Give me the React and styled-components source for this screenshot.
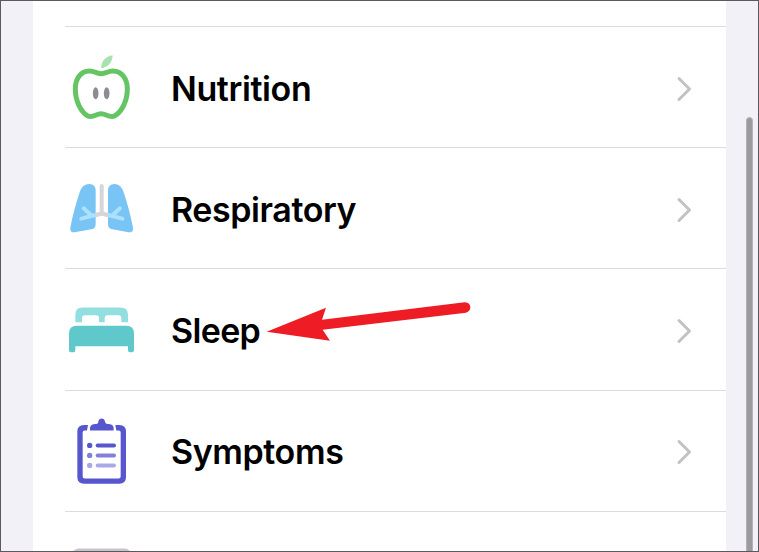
import React from 'react';
import styled, { createGlobalStyle } from 'styled-components';

const GlobalStyle = createGlobalStyle`
  *, *::before, *::after { box-sizing: border-box; }
  html, body { margin: 0; padding: 0; overflow: hidden; }
  body { font-family: Inter, "Liberation Sans", sans-serif; }
`;

const Screen = styled.main`
  position: relative;
  display: grid;
  grid-template-columns: 32px 693px 1fr;
  width: 759px;
  height: 552px;
  overflow: hidden;
  background: #f2f1f7;
  border: 1px solid #5b595f;
`;

const Panel = styled.section`
  grid-column: 2;
  height: 550px;
  padding: 25px 0 0 32px;
  background: #fff;
  overflow: hidden;
`;

const Row = styled.div`
  display: grid;
  grid-template-columns: 106px 1fr auto;
  align-items: center;
  height: 121.2px;
  padding-right: 34px;
  border-top: 1px solid #dcdcde;
`;

const Label = styled.span`
  padding-top: 3px;
  color: #000;
  font-size: 34px;
  font-weight: 600;
  line-height: 42px;
  letter-spacing: ${(p) => p.$tracking}px;
  white-space: nowrap;
`;

const Icon = styled.svg`
  display: block;
  align-self: start;
  width: 80px;
  height: 120px;
`;

const Chevron = styled.svg`
  display: block;
  width: 17px;
  height: 26px;
  margin-top: 3px;
`;

const Gutter = styled.aside`
  grid-column: 3;
  display: flex;
  justify-content: flex-end;
  padding: 116px 5px 0 0;
`;

const ScrollThumb = styled.div`
  width: 7px;
  height: 480px;
  border: 1px solid #b3b2b7;
  border-radius: 4px;
  background: #9b9b9d;
`;

const Arrow = styled.svg`
  position: absolute;
  left: 159px;
  top: 289px;
  width: 320px;
  height: 70px;
  pointer-events: none;
`;

const Apple = () => (
  <Icon viewBox="15 -55 240 360">
    <path d="M123 69C124 48 136 33 158 30C157 52 145 66 123 69Z" fill="#a9e2ae" />
    <path
      d="M123 85C107 85 105 77 89 77C61 77 46 101 46 131C46 166 62 199 82 211C99 220 107 205 123 205C140 205 148 220 165 211C186 198 202 166 202 131C202 101 186 77 158 77C142 77 140 85 123 85Z"
      fill="none" stroke="#65c565" strokeWidth="15" strokeLinejoin="round"
    />
    <ellipse cx="107" cy="144" rx="8.5" ry="18" fill="#8d8c91" />
    <ellipse cx="140" cy="144" rx="8.5" ry="18" fill="#8d8c91" />
  </Icon>
);

const Lungs = () => (
  <Icon viewBox="15 -66 240 360">
    <path d="M107 62V163Q107 176 94 178L44 187Q29 188 31 173C38 137 48 100 59 67Q67 42 88 42Q107 42 107 62Z" fill="#78c4f5" />
    <path d="M144 62V163Q144 176 157 178L206 187Q221 188 219 173C212 137 202 100 191 67Q183 42 163 42Q144 42 144 62Z" fill="#78c4f5" />
    <path d="M125 48V131M107 135L125 131L144 135" fill="none" stroke="#d5d5da" strokeWidth="12" strokeLinejoin="round" />
    <circle cx="125" cy="48" r="6" fill="#d5d5da" />
    <path d="M64 146L107 135M71 115L92 134M187 146L144 135M180 115L159 134" fill="none" stroke="#ade0fc" strokeWidth="12" strokeLinecap="round" />
    <path d="M107 129L125 125L144 129V141L125 137L107 141Z" fill="#d5d5da" />
  </Icon>
);

const Bed = () => (
  <Icon viewBox="15 -78.5 240 360">
    <path d="M46 81V58Q46 37 67 37H182Q204 37 204 58V81H184V69Q184 60 175 60H143Q134 60 134 69V81H117V69Q117 60 108 60H75Q66 60 66 69V81Z" fill="#93dfdf" />
    <path d="M27 115Q27 92 50 92H199Q222 92 222 115V165Q222 171 216 171H210Q204 171 204 165V153H46V165Q46 171 40 171H33Q27 171 27 165Z" fill="#5fc8ca" />
  </Icon>
);

const Clipboard = () => (
  <Icon viewBox="15 -58.2 240 360">
    <path d="M84 44H72Q52 44 52 64V200Q52 220 72 220H178Q198 220 198 200V64Q198 44 178 44H166L169 60H176Q182 60 182 66V198Q182 204 176 204H74Q68 204 68 198V66Q68 60 74 60H81Z" fill="#5756ce" />
    <path d="M90 60Q88 41 105 41Q115 41 115 33Q117 24 125 24Q133 24 135 33Q136 41 146 41Q163 41 161 60Z" fill="#5756ce" />
    <g fill="#5756ce" stroke="#5756ce" strokeWidth="12" strokeLinecap="round">
      <circle cx="89" cy="105" r="8" stroke="none" /><path d="M113 105H162" />
    </g>
    <g fill="#8180db" stroke="#8180db" strokeWidth="12" strokeLinecap="round">
      <circle cx="89" cy="135" r="8" stroke="none" /><path d="M113 135H162" />
    </g>
    <g fill="#aaa9e7" stroke="#aaa9e7" strokeWidth="12" strokeLinecap="round">
      <circle cx="89" cy="165" r="8" stroke="none" /><path d="M113 165H162" />
    </g>
  </Icon>
);

const Device = () => (
  <Icon viewBox="15 63.6 240 360">
    <rect x="36" y="173" width="178" height="200" rx="20" fill="#c6c5cb" />
  </Icon>
);

const categories = [
  { name: 'Nutrition', Art: Apple, tracking: -0.38 },
  { name: 'Respiratory', Art: Lungs, tracking: -0.42 },
  { name: 'Sleep', Art: Bed, tracking: -0.65 },
  { name: 'Symptoms', Art: Clipboard, tracking: -0.4 },
];

export default function App() {
  return (
    <>
      <GlobalStyle />
      <Screen>
        <Panel>
          {categories.map(({ name, Art, tracking }) => (
            <Row key={name}>
              <Art />
              <Label $tracking={tracking}>{name}</Label>
              <Chevron viewBox="0 0 17 26">
                <path d="M4 2.5L14.5 13L4 23.5" fill="none" stroke="#c2c2c5" strokeWidth="3" strokeLinecap="round" strokeLinejoin="round" />
              </Chevron>
            </Row>
          ))}
          <Row><Device /></Row>
        </Panel>
        <Gutter><ScrollThumb /></Gutter>
        <Arrow viewBox="0 0 960 210">
          <path d="M320 125L498 53L486 89L914 37C936 36 936 65 918 68L488 119L510 152Z" fill="#ee1c25" />
        </Arrow>
      </Screen>
    </>
  );
}
